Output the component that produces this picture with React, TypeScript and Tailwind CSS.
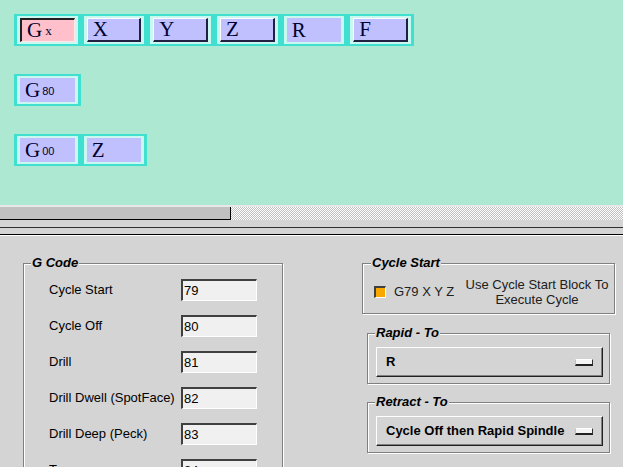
import React from 'react';

type BoxKind = 'pink' | 'raised' | 'flat';

const boxStyles: Record<BoxKind, string> = {
  pink: 'bg-[#ffc0cb] border-t-2 border-l-2 border-b border-r border-t-[#202020] border-l-[#202020] border-b-[#ffe8ec] border-r-[#ffe8ec]',
  raised: 'bg-[#c0c0ff] border-t border-l border-b-2 border-r-2 border-t-white border-l-white border-b-[#202040] border-r-[#202040]',
  flat: 'bg-[#c0c0ff]',
};

function Cell({ kind, letter, sub, subSans }: { kind: BoxKind; letter: string; sub?: string; subSans?: boolean }) {
  return (
    <div className="w-[66.67px] h-[32px] border-x-[3px] border-y-2 border-[#40e0d0] bg-[#c8f8f0] px-[3px] py-[2px]">
      <div className={`h-full flex items-center pl-[5px] text-[#000030] ${boxStyles[kind]}`}>
        <span className="font-['Liberation_Serif',serif] leading-none">
          <span className="text-[21px]">{letter}</span>
          {sub && (
            <span
              className={
                subSans
                  ? "ml-[2px] align-[2px] text-[11px] font-['Liberation_Sans',sans-serif]"
                  : 'ml-[3px] align-[2px] text-[13px]'
              }
            >
              {sub}
            </span>
          )}
        </span>
      </div>
    </div>
  );
}

const codes = [
  { label: 'Cycle Start', value: '79' },
  { label: 'Cycle Off', value: '80' },
  { label: 'Drill', value: '81' },
  { label: 'Drill Dwell (SpotFace)', value: '82' },
  { label: 'Drill Deep (Peck)', value: '83' },
  { label: 'Tap', value: '84' },
];

const groupBox = 'border border-[#808080] shadow-[inset_1px_1px_0_#fff,1px_1px_0_#fff]';
const legendCls = 'text-[13px] font-bold italic leading-[16px] px-[1px] bg-[#d4d4d4] text-black';

function Dropdown({ value }: { value: string }) {
  return (
    <div className="h-[30px] flex items-center justify-between pl-[9px] pr-[9px] bg-[#d4d4d4] border border-t-white border-l-white border-b-[#202020] border-r-[#202020] shadow-[inset_-1px_-1px_0_#808080] text-[13px] font-bold">
      <span>{value}</span>
      <span className="w-[18px] h-[7px] bg-[#f4f4f4] border-t border-l border-b-2 border-r border-t-white border-l-[#c0c0c0] border-b-[#202020] border-r-[#303030]" />
    </div>
  );
}

export default function App() {
  return (
    <div className="w-[623px] h-[467px] overflow-hidden bg-[#d4d4d4] font-['Liberation_Sans',Arial,sans-serif]">
      {/* block editor */}
      <div className="h-[205px] bg-[#ade8d2] pt-[14px] pl-[14px] flex flex-col gap-[28px]">
        <div className="flex">
          <Cell kind="pink" letter="G" sub="x" />
          <Cell kind="raised" letter="X" />
          <Cell kind="raised" letter="Y" />
          <Cell kind="raised" letter="Z" />
          <Cell kind="flat" letter="R" />
          <Cell kind="raised" letter="F" />
        </div>
        <div className="flex">
          <Cell kind="flat" letter="G" sub="80" subSans />
        </div>
        <div className="flex">
          <Cell kind="flat" letter="G" sub="00" subSans />
          <Cell kind="flat" letter="Z" />
        </div>
      </div>

      {/* scrollbar + splitter */}
      <div className="h-[2px] bg-[#e8e8e8]" />
      <div className="h-[13px] flex">
        <div className="w-[231px] bg-[#c0c0c0] border-r border-b border-black" />
        <div className="flex-1 bg-[repeating-conic-gradient(#c0c0c0_0%_25%,#ffffff_0%_50%)] [background-size:2px_2px]" />
      </div>
      <div className="h-[7px]" />
      <div className="h-px bg-[#303030]" />
      <div className="h-[6px]" />
      <div className="h-px bg-black" />
      <div className="h-px bg-white" />

      <div className="flex pl-[23px] pt-[19px] text-[13px] text-black">
        <fieldset className={`w-[260px] h-[260px] px-[7px] ${groupBox}`}>
          <legend className={legendCls}>G Code</legend>
          <div className="pl-[18px] pt-[1px]">
            {codes.map((c) => (
              <div key={c.label} className="h-[36px] flex items-center">
                <span className="w-[132px]">{c.label}</span>
                <div className="w-[76px] h-[22px] flex items-center pl-[1px] bg-[#f0f0f0] border-t-2 border-l-2 border-b border-r border-t-[#404040] border-l-[#404040] border-b-white border-r-white">
                  {c.value}
                </div>
              </div>
            ))}
          </div>
        </fieldset>

        <div className="ml-[79px] w-[253px] flex flex-col">
          <fieldset className={`pl-[8px] pr-[2px] ${groupBox}`}>
            <legend className={legendCls}>Cycle Start</legend>
            <div className="flex items-center pt-[6px] pb-[6px]">
              <span className="ml-[3px] w-[12px] h-[12px] bg-[#f8a800] border-t-2 border-l-2 border-b border-r border-t-[#404040] border-l-[#404040] border-b-white border-r-white" />
              <span className="ml-[8px] text-[#202020]">G79 X Y Z</span>
              <div className="ml-auto w-[150px] text-center leading-[15px] text-[#202020]">
                Use Cycle Start Block To
                <br />
                Execute Cycle
              </div>
            </div>
          </fieldset>

          <fieldset className={`mx-[5px] mt-[11px] pl-[7px] pr-[6px] pb-[6px] ${groupBox}`}>
            <legend className={legendCls}>Rapid - To</legend>
            <div className="mt-[6px] ml-[1px]">
              <Dropdown value="R" />
            </div>
          </fieldset>

          <fieldset className={`mx-[5px] mt-[10px] pl-[7px] pr-[6px] pb-[6px] ${groupBox}`}>
            <legend className={legendCls}>Retract - To</legend>
            <div className="mt-[6px] ml-[1px]">
              <Dropdown value="Cycle Off then Rapid Spindle" />
            </div>
          </fieldset>
        </div>
      </div>
    </div>
  );
}
